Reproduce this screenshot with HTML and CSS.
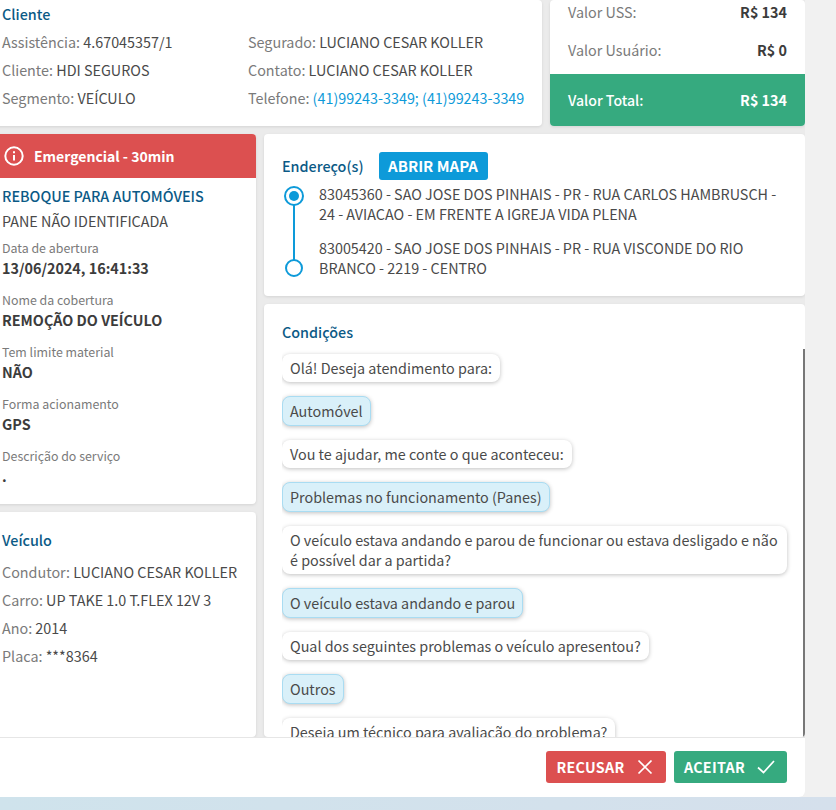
FILE: index.html
```html
<!DOCTYPE html>
<html lang="pt-BR">
<head>
<meta charset="utf-8">
<title>Atendimento</title>
<link rel="stylesheet" href="styles.css">
</head>
<body>
<div class="modal">
  <div class="content">
    <div class="top-row">
      <section class="card client">
        <h2 class="title">Cliente</h2>
        <div class="client-grid">
          <div class="col">
            <p class="row"><span class="muted">Assistência:</span> 4.67045357/1</p>
            <p class="row"><span class="muted">Cliente:</span> HDI SEGUROS</p>
            <p class="row"><span class="muted">Segmento:</span> VEÍCULO</p>
          </div>
          <div class="col">
            <p class="row"><span class="muted">Segurado:</span> LUCIANO CESAR KOLLER</p>
            <p class="row"><span class="muted">Contato:</span> LUCIANO CESAR KOLLER</p>
            <p class="row"><span class="muted">Telefone:</span> <span class="link">(41)99243-3349; (41)99243-3349</span></p>
          </div>
        </div>
      </section>
      <section class="card values">
        <div class="value-list">
          <p class="value-row"><span class="muted">Valor USS:</span><b>R$ 134</b></p>
          <p class="value-row"><span class="muted">Valor Usuário:</span><b>R$ 0</b></p>
        </div>
        <p class="total"><span>Valor Total:</span><b>R$ 134</b></p>
      </section>
    </div>
    <div class="main-row">
      <div class="left-col">
        <section class="card service">
          <header class="alert">
            <svg class="alert-icon" width="20" height="20" viewBox="0 0 20 20" fill="none" stroke="#fff" stroke-width="2"><circle cx="10" cy="10" r="8.7"/><path d="M10 9v5.6M10 5.2v2"/></svg>
            <span>Emergencial - 30min</span>
          </header>
          <div class="service-body">
            <h2 class="title service-title">REBOQUE PARA AUTOMÓVEIS</h2>
            <p class="service-sub">PANE NÃO IDENTIFICADA</p>
            <div class="field"><span class="label">Data de abertura</span><b class="val">13/06/2024, 16:41:33</b></div>
            <div class="field"><span class="label">Nome da cobertura</span><b class="val">REMOÇÃO DO VEÍCULO</b></div>
            <div class="field"><span class="label">Tem limite material</span><b class="val">NÃO</b></div>
            <div class="field"><span class="label">Forma acionamento</span><b class="val">GPS</b></div>
            <div class="field"><span class="label">Descrição do serviço</span><b class="val">.</b></div>
          </div>
        </section>
        <section class="card vehicle">
          <h2 class="title vehicle-title">Veículo</h2>
          <p class="row"><span class="muted">Condutor:</span> LUCIANO CESAR KOLLER</p>
          <p class="row"><span class="muted">Carro:</span> UP TAKE 1.0 T.FLEX 12V 3</p>
          <p class="row"><span class="muted">Ano:</span> 2014</p>
          <p class="row"><span class="muted">Placa:</span> ***8364</p>
        </section>
      </div>
      <div class="right-col">
        <section class="card address">
          <div class="address-head">
            <h2 class="title">Endereço(s)</h2>
            <button class="map-btn">ABRIR MAPA</button>
          </div>
          <div class="route">
            <svg class="route-line" width="20" height="92" viewBox="0 0 20 92" fill="none" stroke="#0d9ad9" stroke-width="2"><circle cx="10" cy="10" r="9"/><circle cx="10" cy="10" r="5" fill="#0d9ad9" stroke="none"/><path d="M10 19v55"/><circle cx="10" cy="82" r="8"/></svg>
            <div class="stops">
              <p class="stop">83045360 - SAO JOSE DOS PINHAIS - PR - RUA CARLOS HAMBRUSCH - 24 - AVIACAO - EM FRENTE A IGREJA VIDA PLENA</p>
              <p class="stop">83005420 - SAO JOSE DOS PINHAIS - PR - RUA VISCONDE DO RIO BRANCO - 2219 - CENTRO</p>
            </div>
          </div>
        </section>
        <section class="card conditions">
          <h2 class="title cond-title">Condições</h2>
          <div class="chat">
            <p class="bubble">Olá! Deseja atendimento para:</p>
            <p class="bubble answer">Automóvel</p>
            <p class="bubble">Vou te ajudar, me conte o que aconteceu:</p>
            <p class="bubble answer">Problemas no funcionamento (Panes)</p>
            <p class="bubble">O veículo estava andando e parou de funcionar ou estava desligado e não é possível dar a partida?</p>
            <p class="bubble answer">O veículo estava andando e parou</p>
            <p class="bubble">Qual dos seguintes problemas o veículo apresentou?</p>
            <p class="bubble answer">Outros</p>
            <p class="bubble">Deseja um técnico para avaliação do problema?</p>
          </div>
        </section>
      </div>
    </div>
  </div>
  <footer class="footer">
    <button class="action refuse">RECUSAR
      <svg width="16" height="16" viewBox="0 0 16 16" fill="none" stroke="#fff" stroke-width="1.7"><path d="M1.500 1.500l13 13M14.500 1.500l-13 13"/></svg>
    </button>
    <button class="action accept">ACEITAR
      <svg width="18" height="14" viewBox="0 0 18 14" fill="none" stroke="#fff" stroke-width="1.7"><path d="M1 7.500l5.500 5L17 1"/></svg>
    </button>
  </footer>
</div>
<div class="backdrop"></div>
</body>
</html>
```
FILE: styles.css
```css
* { box-sizing: border-box; }
html, body { margin: 0; padding: 0; }
body {
  width: 836px;
  height: 810px;
  overflow: hidden;
  background: #f1f1f1;
  font-family: "Noto Sans CJK JP", "Liberation Sans", sans-serif;
  font-size: 14.35px;
  line-height: 20px;
  color: #4a4a4a;
}
p, h2 { margin: 0; }
.modal {
  width: 821px;
  height: 797px;
  margin-left: -16px;
  display: flex;
  flex-direction: column;
  background: #ebebeb;
  border-radius: 0 0 6px 0;
  overflow: hidden;
}
.content {
  flex: 1;
  min-height: 0;
  overflow: hidden;
  display: flex;
  flex-direction: column;
  gap: 8px;
}
.top-row {
  display: flex;
  gap: 8px;
  height: 126px;
  flex: none;
}
.card {
  background: #fff;
  border-radius: 4px;
  box-shadow: 0 1px 3px rgba(0,0,0,.1);
}
.title {
  font-size: 14.35px;
  font-weight: 500;
  line-height: 20px;
  color: #0b5a86;
}
.muted { color: #7a7a7a; }
.link { color: #0d9ad9; }
.client {
  width: 558px;
  padding: 4px 18px 0;
}
.client-grid {
  display: grid;
  grid-template-columns: 246px 1fr;
  margin-top: 4px;
}
.row {
  height: 28px;
  line-height: 28px;
  white-space: nowrap;
}
.values {
  flex: 1;
  display: flex;
  flex-direction: column;
  overflow: hidden;
}
.value-list {
  height: 74px;
  padding: 0 18px;
}
.value-row {
  display: flex;
  justify-content: space-between;
  height: 38px;
  line-height: 24px;
}
.value-row b { color: #3c3c3c; font-weight: 700; }
.total {
  height: 52px;
  padding: 0 18px;
  display: flex;
  justify-content: space-between;
  align-items: center;
  background: #36aa7f;
  color: #fff;
}
.total span { font-size: 14.100px; font-weight: 500; }
.main-row {
  flex: 1;
  min-height: 0;
  display: flex;
  gap: 8px;
}
.left-col {
  width: 272px;
  flex: none;
  display: flex;
  flex-direction: column;
  gap: 8px;
}
.service { height: 370px; overflow: hidden; }
.alert {
  height: 44px;
  padding-left: 20px;
  display: flex;
  align-items: center;
  gap: 10px;
  background: #dc5050;
  color: #fff;
  font-size: 14px;
  font-weight: 700;
}
.service-body { padding: 8px 18px 0; }
.service-title { line-height: 20px; }
.service-sub { line-height: 24px; margin-top: 3px; }
.field {
  display: flex;
  flex-direction: column;
  margin-top: 4px;
  padding-top: 2px;
  height: 44px;
}
.field + .field { margin-top: 8px; }
.label {
  font-size: 12.400px;
  line-height: 18px;
  color: #7a7a7a;
}
.val {
  font-weight: 700;
  line-height: 21px;
  color: #3c3c3c;
}
.vehicle {
  flex: 1;
  padding: 18px 18px 0;
}
.vehicle-title { margin-bottom: 8px; }
.right-col {
  flex: 1;
  min-width: 0;
  display: flex;
  flex-direction: column;
  gap: 8px;
}
.address {
  height: 162px;
  flex: none;
  padding: 18px 18px 0;
}
.address-head {
  display: flex;
  align-items: center;
  gap: 15px;
  height: 28px;
}
.map-btn {
  height: 28px;
  width: 109px;
  padding: 0;
  border: 0;
  border-radius: 3px;
  background: #0d9ad9;
  color: #fff;
  font: 700 15px/28px "Noto Sans CJK JP", "Liberation Sans", sans-serif;
}
.route {
  display: flex;
  gap: 15px;
  margin-top: 4px;
  margin-left: 2px;
}
.route-line { flex: none; margin-top: 2px; }
.stops {
  display: flex;
  flex-direction: column;
  gap: 14px;
  width: 470px;
}
.stop { line-height: 20px; }
.conditions {
  flex: 1;
  min-height: 0;
  padding-left: 18px;
  overflow: hidden;
}
.cond-title { padding-top: 18px; height: 45px; }
.chat {
  display: flex;
  flex-direction: column;
  align-items: flex-start;
  gap: 14px;
  padding-top: 5px;
  padding-right: 16px;
  height: 388px;
  overflow: hidden;
  border-right: 2px solid #777;
}
.bubble {
  padding: 4px 8px;
  line-height: 20px;
  background: #fff;
  border-radius: 8px;
  box-shadow: 0 1px 4px rgba(0,0,0,.25);
  flex: none;
  max-width: 505px;
}
.answer {
  padding: 4px 7px;
  background: #d9f0f9;
  border: 1px solid #a9dcf2;
}
.footer {
  height: 60px;
  flex: none;
  background: #fff;
  border-top: 1px solid #e6e6e6;
  display: flex;
  justify-content: flex-end;
  align-items: flex-start;
  gap: 8px;
  padding: 13px 18px 0 0;
}
.action {
  height: 32px;
  padding: 0;
  border: 0;
  border-radius: 3px;
  color: #fff;
  display: flex;
  align-items: center;
  justify-content: center;
  gap: 12px;
  font: 700 14.300px/32px "Noto Sans CJK JP", "Liberation Sans", sans-serif;
  letter-spacing: .3px;
}
.refuse { width: 120px; padding-right: 3px; background: #dc5050; }
.accept { width: 113px; padding-right: 2px; background: #36aa7f; }
.backdrop {
  height: 13px;
  background: linear-gradient(90deg, #cfe3ec, #d5e0ec);
}
```
